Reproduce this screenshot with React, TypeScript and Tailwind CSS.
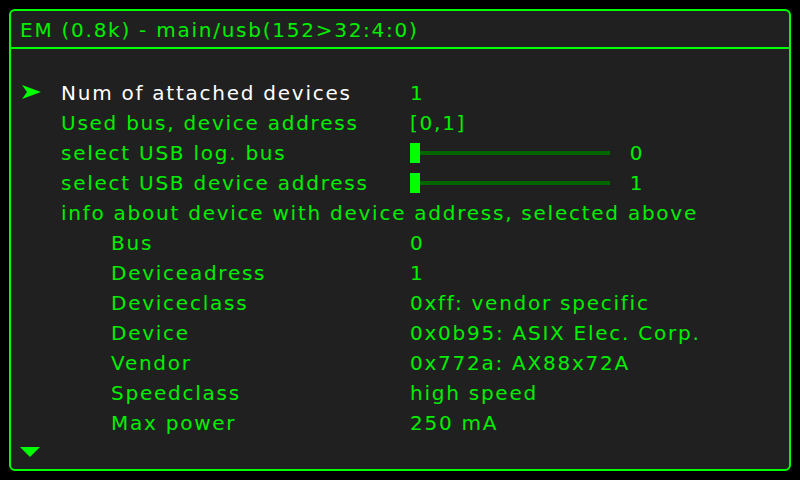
import React from "react";

type Row =
  | { kind: "text"; label: string; value?: string; indent?: boolean; selected?: boolean }
  | { kind: "slider"; label: string; value: string; pos: number };

const ROWS: Row[] = [
  { kind: "text", label: "Num of attached devices", value: "1", selected: true },
  { kind: "text", label: "Used bus, device address", value: "[0,1]" },
  { kind: "slider", label: "select USB log. bus", value: "0", pos: 0 },
  { kind: "slider", label: "select USB device address", value: "1", pos: 0 },
  { kind: "text", label: "info about device with device address, selected above" },
  { kind: "text", label: "Bus", value: "0", indent: true },
  { kind: "text", label: "Deviceadress", value: "1", indent: true },
  { kind: "text", label: "Deviceclass", value: "0xff: vendor specific", indent: true },
  { kind: "text", label: "Device", value: "0x0b95: ASIX Elec. Corp.", indent: true },
  { kind: "text", label: "Vendor", value: "0x772a: AX88x72A", indent: true },
  { kind: "text", label: "Speedclass", value: "high speed", indent: true },
  { kind: "text", label: "Max power", value: "250 mA", indent: true },
];

function Pointer() {
  return (
    <svg width="20" height="16" viewBox="0 0 20 16" className="block">
      <path d="M0 0 L19 7 L0 14 L5 7 Z" fill="#00ff00" />
    </svg>
  );
}

function Slider({ value }: { value: string }) {
  return (
    <div className="flex items-center h-full">
      <div className="relative w-[200px] h-[20px] flex items-center">
        <div className="w-full h-[4px] bg-[#006600]" />
        <div className="absolute left-0 top-0 w-[10px] h-[20px] bg-[#00ff00]" />
      </div>
      <span className="w-[54px] text-center">{value}</span>
    </div>
  );
}

export default function App() {
  return (
    <div
      className="w-[800px] h-[480px] bg-black p-[9px] text-[#00ee00] text-[20px] tracking-[1.75px]"
      style={{ fontFamily: '"DejaVu Sans", sans-serif' }}
    >
      <div className="w-full h-full border-2 border-[#00ff00] rounded-[6px] bg-[#202020] flex flex-col">
        <div className="h-[38px] flex items-center pl-[9px] pt-[2px] border-b-2 border-[#00ff00]">
          EM (0.8k) - main/usb(152&gt;32:4:0)
        </div>
        <div className="flex-1 flex flex-col pt-[29px] pl-[11px]">
          {ROWS.map((r, i) => (
            <div key={i} className="h-[30px] flex items-center whitespace-nowrap">
              <div className="w-[39px] flex items-center">{r.kind === "text" && r.selected && <Pointer />}</div>
              <div
                className={`${r.kind === "text" && r.indent ? "pl-[50px]" : ""} ${
                  r.kind === "text" && !r.value && !r.selected ? "" : "w-[349px] shrink-0"
                } ${r.kind === "text" && r.selected ? "text-white" : ""}`}
              >
                {r.label}
              </div>
              {r.kind === "slider" ? (
                <Slider value={r.value} />
              ) : (
                r.value && <div>{r.value}</div>
              )}
            </div>
          ))}
          <div className="mt-[9px] -ml-[2px] w-0 h-0 border-l-[10px] border-r-[10px] border-t-[10px] border-l-transparent border-r-transparent border-t-[#00ff00]" />
        </div>
      </div>
    </div>
  );
}
